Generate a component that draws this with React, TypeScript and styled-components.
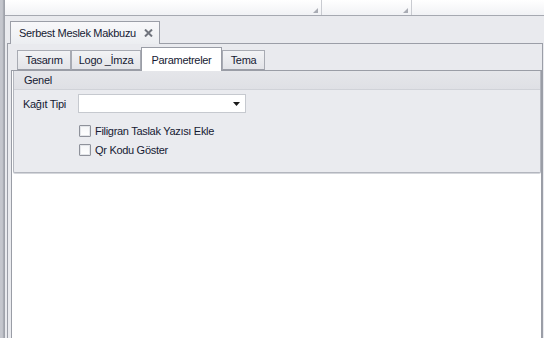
import React from "react";
import styled, { createGlobalStyle } from "styled-components";

const GlobalStyle = createGlobalStyle`
  html, body {
    margin: 0;
    padding: 0;
    background: #e9eaee;
  }
  * {
    box-sizing: border-box;
  }
`;

const Root = styled.div`
  width: 544px;
  height: 338px;
  display: flex;
  overflow: hidden;
  background: #e9eaee;
  font-family: "Liberation Sans", Arial, sans-serif;
  font-size: 11px;
  letter-spacing: -0.3px;
  color: #161a33;
`;

const Splitter = styled.div`
  width: 4px;
  flex: none;
  background: linear-gradient(to right, #c4c6cd 0, #c4c6cd 2px, #d6d8dd 2px, #a9acb4 3px);
`;

const Main = styled.div`
  flex: 1;
  display: flex;
  flex-direction: column;
  border-left: 1px solid #9fa2aa;
`;

const HeaderRow = styled.div`
  height: 16px;
  flex: none;
  display: flex;
  background: linear-gradient(to bottom, #ffffff, #f1f2f5);
  border-bottom: 1px solid #a6a9b1;
`;

const HeaderCell = styled.div<{ $width?: number }>`
  position: relative;
  flex: ${(p) => (p.$width ? `0 0 ${p.$width}px` : "1")};
  border-right: ${(p) => (p.$width ? "1px solid #c9cbd1" : "none")};
`;

const Grip = styled.svg`
  position: absolute;
  right: 3px;
  bottom: 2px;
`;

const DocArea = styled.div`
  flex: 1;
  display: flex;
  flex-direction: column;
  padding: 5px 1px 0 2px;
`;

const DocTabStrip = styled.div`
  display: flex;
  padding-left: 3px;
`;

const DocTab = styled.div`
  width: 150px;
  height: 23px;
  margin-bottom: -1px;
  display: flex;
  align-items: center;
  justify-content: space-between;
  padding: 0 6px 1px 8px;
  border: 1px solid #9b9ea7;
  border-bottom: none;
  background: linear-gradient(to bottom, #f8f8fa, #eceef1);
  position: relative;
  z-index: 1;
`;

const CloseIcon = styled.svg`
  flex: none;
  margin-top: 1px;
`;

const DocFrame = styled.div`
  flex: 1;
  display: flex;
  flex-direction: column;
  border: 1px solid #9b9ea7;
  border-bottom: none;
  background: #e9eaee;
  padding-top: 3px;
`;

const TabStrip = styled.div`
  display: flex;
  align-items: flex-end;
  padding-left: 9px;
  height: 23px;
  position: relative;
  z-index: 1;
`;

const Tab = styled.div<{ $active?: boolean; $width: number }>`
  width: ${(p) => p.$width}px;
  height: ${(p) => (p.$active ? "24px" : "20px")};
  margin-bottom: ${(p) => (p.$active ? "-1px" : "0")};
  display: flex;
  align-items: center;
  justify-content: center;
  padding: ${(p) => (p.$active ? "1px 0 0 0" : "0 0 1px 0")};
  border: 1px solid ${(p) => (p.$active ? "#9a9da6" : "#a8abb3")};
  border-bottom: ${(p) => (p.$active ? "none" : "1px solid #9a9da6")};
  background: ${(p) =>
    p.$active ? "#ffffff" : "linear-gradient(to bottom, #f2f3f5, #e3e4e8)"};
`;

const TabPage = styled.div`
  flex: 1;
  margin-left: 3px;
  border: 1px solid #9a9da6;
  border-bottom: none;
  background: #ffffff;
  padding-left: 1px;
`;

const Group = styled.div`
  height: 102px;
  display: flex;
  flex-direction: column;
  border: 1px solid #b3b6be;
  border-top: none;
  border-radius: 0 0 2px 2px;
  background: #eaebef;
  box-shadow: 0 1px 0 #d4d6db;
`;

const GroupHeader = styled.div`
  height: 19px;
  flex: none;
  display: flex;
  align-items: center;
  padding-left: 10px;
  background: linear-gradient(to bottom, #e5e6ea, #dfe0e5);
  border-bottom: 1px solid #d0d2d8;
`;

const GroupBody = styled.div`
  flex: 1;
  padding: 4px 0 0 9px;
  display: flex;
  flex-direction: column;
`;

const FieldRow = styled.div`
  display: flex;
  align-items: center;
  height: 19px;
`;

const FieldLabel = styled.div`
  width: 55px;
  flex: none;
`;

const Combo = styled.div`
  width: 168px;
  height: 19px;
  background: #ffffff;
  border: 1px solid #c6c9cf;
  display: flex;
  align-items: center;
  justify-content: flex-end;
  padding-right: 5px;
`;

const CheckRow = styled.div<{ $first?: boolean }>`
  display: flex;
  align-items: center;
  height: 19px;
  margin-top: ${(p) => (p.$first ? "8px" : "0")};
  padding-left: 56px;
  gap: 4px;
`;

const CheckBox = styled.div`
  width: 12px;
  height: 12px;
  flex: none;
  border: 1px solid #8e919a;
  border-radius: 1px;
  background: linear-gradient(to bottom, #f4f5f7, #ffffff);
  box-shadow: inset 0 0 0 1px #e3e5e9;
`;

const GripIcon = () => (
  <Grip width="5" height="5" viewBox="0 0 5 5">
    <path d="M5 0 L5 5 L0 5 Z" fill="#a9acb4" />
  </Grip>
);

const tabs = [
  { label: "Tasarım", width: 54 },
  { label: "Logo _İmza", width: 70 },
  { label: "Parametreler", width: 81, active: true },
  { label: "Tema", width: 43 },
];

const App = () => {
  return (
    <Root>
      <GlobalStyle />
      <Splitter />
      <Main>
        <HeaderRow>
          <HeaderCell $width={317}>
            <GripIcon />
          </HeaderCell>
          <HeaderCell $width={90}>
            <GripIcon />
          </HeaderCell>
          <HeaderCell />
        </HeaderRow>

        <DocArea>
          <DocTabStrip>
            <DocTab>
              <span>Serbest Meslek Makbuzu</span>
              <CloseIcon width="9" height="8" viewBox="0 0 9 8">
                <path
                  d="M1 0.5 L8 7.5 M8 0.5 L1 7.5"
                  stroke="#70747d"
                  strokeWidth="2"
                />
              </CloseIcon>
            </DocTab>
          </DocTabStrip>

          <DocFrame>
            <TabStrip>
              {tabs.map((t) => (
                <Tab key={t.label} $width={t.width} $active={t.active}>
                  {t.label}
                </Tab>
              ))}
            </TabStrip>

            <TabPage>
              <Group>
                <GroupHeader>Genel</GroupHeader>
                <GroupBody>
                  <FieldRow>
                    <FieldLabel>Kağıt Tipi</FieldLabel>
                    <Combo>
                      <svg width="7" height="4" viewBox="0 0 7 4">
                        <path d="M0 0 L7 0 L3.5 4 Z" fill="#1a1a1a" />
                      </svg>
                    </Combo>
                  </FieldRow>
                  <CheckRow $first>
                    <CheckBox />
                    <span>Filigran Taslak Yazısı Ekle</span>
                  </CheckRow>
                  <CheckRow>
                    <CheckBox />
                    <span>Qr Kodu Göster</span>
                  </CheckRow>
                </GroupBody>
              </Group>
            </TabPage>
          </DocFrame>
        </DocArea>
      </Main>
    </Root>
  );
};

export default App;
